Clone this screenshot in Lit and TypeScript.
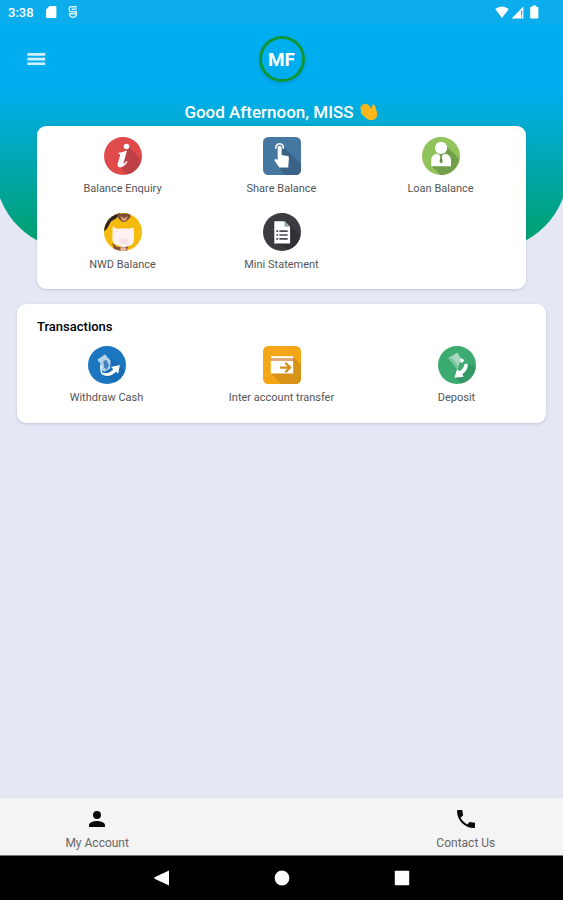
import { LitElement, html, css, TemplateResult } from "lit";
import { customElement } from "lit/decorators.js";

interface Action {
  label: string;
  icon: TemplateResult;
}

const infoIcon = html`<svg class="icon" viewBox="0 0 37 37" aria-hidden="true">
  <circle cx="18.5" cy="18.5" r="18.5" fill="#e14a4a" />
  <path d="M24 9 L36.2 22.5 A18.5 18.5 0 0 1 22 36.6 L15 28 Z" fill="#be4145" />
  <circle cx="21.9" cy="9.3" r="2.7" fill="#fff" />
  <path d="M14.2 15.4 C17 15 19.6 14.4 22.4 13.2 L19 25.2 C18.8 26.6 20.2 25.8 22 23.4 L23 24.2 C20.6 28.2 18 29.6 15.6 29.6 C13.4 29.6 12.8 28 13.4 25.6 L15.6 18.2 C16 17 15.2 16.6 13.9 16.6 Z" fill="#fff" />
</svg>`;

const touchIcon = html`<svg class="icon" viewBox="0 0 37 37" aria-hidden="true">
  <rect width="37" height="37" rx="5" fill="#4677a0" />
  <path d="M20 10 L37 26 V32 a5 5 0 0 1 -5 5 H22 L14 28 Z" fill="#3b6387" />
  <path d="M12.8 11.4 a3.6 3.6 0 1 1 6.8 0" fill="none" stroke="#fff" stroke-width="1.6" />
  <path d="M14.3 10.4 a1.9 1.9 0 0 1 3.8 0 V17.5 L24 18.6 C25 18.9 25.3 19.6 25.2 20.6 L24.6 29.6 H15.8 L11.2 23 C10.8 21.9 12 20.9 13 21.6 L14.3 22.6 Z" fill="#fff" />
</svg>`;

const personIcon = html`<svg class="icon" viewBox="0 0 37 37" aria-hidden="true">
  <circle cx="18.5" cy="18.5" r="18.5" fill="#91c35b" />
  <path d="M23 8 L36.4 21.5 A18.5 18.5 0 0 1 20 37 H18 L9.5 28.5 Z" fill="#739f4a" />
  <circle cx="18.5" cy="10.6" r="6" fill="#fff" />
  <path d="M9 28.4 V23 C9 19 11.4 17 14.6 16.4 L18.5 18.6 L22.4 16.4 C25.8 17 28.2 19 28.2 23 V28.4 Z" fill="#fff" />
  <path d="M17.3 18 h2.6 l-0.6 2 l0.9 4.2 l-1.6 1.7 l-1.6 -1.7 l0.9 -4.2 Z" fill="#6c9344" />
</svg>`;

const piggyIcon = html`<svg class="icon" viewBox="0 0 37 37" aria-hidden="true">
  <defs><clipPath id="round"><circle cx="18.5" cy="18.5" r="18.5" /></clipPath></defs>
  <g clip-path="url(#round)">
    <rect width="37" height="37" fill="#f4bb0c" />
    <path d="M0 18 V0 H16 L12 5 L7 8 L3 15 Z" fill="#2c2324" />
    <path d="M12 1 L25 0 L26 4 L22 8 L18 9 L14 5 Z" fill="#7a4a33" />
    <path d="M16 3 L20 5 L23 3 L22 7 L18 8 Z" fill="#d8a078" />
    <path d="M8 29 L13 33 H20 L24 32 L22 37 H10 Z" fill="#8a4c3c" />
    <path d="M16 33 L22 34 L21 37 H16 Z" fill="#e8b79c" />
    <path d="M8.4 13 L12 15.2 H25 L28.8 14 L29.4 20 L29 28 Q28.6 30.4 26 31.4 L20 33.6 L13 31.4 Q8.4 30 8.2 26 Z" fill="#fcf0f0" />
    <ellipse cx="19" cy="27.4" rx="4.4" ry="2.8" fill="#f6e2e2" />
  </g>
</svg>`;

const statementIcon = html`<svg class="icon" viewBox="0 0 37 37" aria-hidden="true">
  <circle cx="18.5" cy="18.5" r="18.5" fill="#3b3b41" />
  <path d="M26 12 L36.4 22 A18.5 18.5 0 0 1 25 35.6 L12 29 Z" fill="#303035" />
  <path d="M11 8 H21 L26.4 13.4 V29.8 H11 Z" fill="#fff" />
  <path d="M21 8 L26.4 13.4 H21 Z" fill="#8faaa8" />
  <path d="M13 17.6 h1.8 M13 21.4 h1.8 M13 25.2 h1.8 M16 17.6 h8 M16 21.4 h8 M16 25.2 h8" stroke="#4a4a50" stroke-width="1.6" />
</svg>`;

const withdrawIcon = html`<svg class="icon" viewBox="0 0 37 37" aria-hidden="true">
  <circle cx="18.5" cy="18.5" r="18.5" fill="#1c76c0" />
  <path d="M22 12 L31 18.5 L36 24 A18.5 18.5 0 0 1 26 35.4 L15 28 Z" fill="#186cb3" />
  <path d="M9 13.4 L16.6 8 L19 11 L22 14 L21.6 22 L16 25 Q12 24 12.8 18 Z" fill="#b4d1ea" />
  <path d="M15 14.6 L18 13.6 L20.6 19 L18 23 L15.6 21 Z" fill="#3f82bd" />
  <path d="M12.6 18 Q12 26 15 28" fill="none" stroke="#fff" stroke-width="1.4" />
  <path d="M14.4 26 Q20 27.6 24.6 22.6 L22.4 20.4 L31 18.4 L29.4 27 L27.4 25 Q21.6 30.6 15.4 28.6 Z" fill="#fff" />
</svg>`;

const transferIcon = html`<svg class="icon" viewBox="0 0 37 37" aria-hidden="true">
  <rect width="37" height="37" rx="5" fill="#f3a716" />
  <path d="M29 10 L37 18 V32 a5 5 0 0 1 -5 5 H18 L8 27 Z" fill="#d69318" />
  <path d="M7.6 10 H29.4 V12 H7.6 Z M7.6 14.4 H29.4 V26.8 H7.6 Z" fill="#fff" />
  <path d="M7.6 12 H29.4 V14.4 H7.6 Z" fill="#dca77c" />
  <path d="M16.6 21 H26 M21.8 16.4 L26.4 21 L21.8 25.6" fill="none" stroke="#d1901b" stroke-width="2.2" />
</svg>`;

const depositIcon = html`<svg class="icon" viewBox="0 0 37 37" aria-hidden="true">
  <circle cx="18.5" cy="18.5" r="18.5" fill="#3bab72" />
  <path d="M28 17 L36.6 21 A18.5 18.5 0 0 1 22 36.6 L17 30 Z" fill="#349767" />
  <path d="M10 11.6 L19 6.4 L21.6 11 L25.4 13.4 L24 16.4 L21 16 L19.4 22 Z" fill="#a6d7bd" />
  <path d="M10 11.6 L14 12 L20 20 L18.6 22.6 Z" fill="#7fc39f" />
  <path d="M21.8 12 L25.4 13.6 L24 16.4 L21.6 15 Z" fill="#fff" />
  <path d="M29 17.6 Q29.4 23.6 23.6 27.6 L25 30 L16 31 L18.6 22.4 L20.8 24.6 Q25.4 22 25.8 17.4 Z" fill="#fff" />
</svg>`;

const balances: Action[] = [
  { label: "Balance Enquiry", icon: infoIcon },
  { label: "Share Balance", icon: touchIcon },
  { label: "Loan Balance", icon: personIcon },
  { label: "NWD Balance", icon: piggyIcon },
  { label: "Mini Statement", icon: statementIcon },
];

const transactions: Action[] = [
  { label: "Withdraw Cash", icon: withdrawIcon },
  { label: "Inter account transfer", icon: transferIcon },
  { label: "Deposit", icon: depositIcon },
];

@customElement("app-root")
export class AppRoot extends LitElement {
  static styles = css`
    :host {
      display: flex;
      flex-direction: column;
      min-height: 100vh;
      background: #e5e8f4;
      font-family: Roboto, "Liberation Sans", sans-serif;
      color: #555;
    }
    * {
      box-sizing: border-box;
    }
    button {
      border: 0;
      padding: 0;
      margin: 0;
      background: none;
      font: inherit;
      color: inherit;
      cursor: pointer;
    }
    svg {
      display: block;
    }
    .hero {
      position: relative;
      isolation: isolate;
      overflow: hidden;
      height: 250px;
      color: #fff;
    }
    /* The backdrop runs past both edges so its corners meet the sides at an angle. */
    .hero::before {
      content: "";
      position: absolute;
      z-index: -1;
      inset: 0 -5px;
      border-radius: 0 0 80px 80px;
      background: linear-gradient(#0cadec 0, #0cadec 22px, #00aeef 26px, #00aeef 90px, #009f66 250px);
    }
    .status {
      display: flex;
      align-items: center;
      justify-content: space-between;
      height: 24px;
      padding: 0 21px 0 8px;
      font-size: 13px;
      font-weight: 500;
    }
    .status-group {
      display: flex;
      align-items: center;
      gap: 10px;
    }
    .signals {
      gap: 2px;
    }
    .toolbar {
      display: grid;
      grid-template-columns: 1fr auto 1fr;
      align-items: center;
      height: 70px;
      padding: 0 24px;
    }
    .menu {
      width: 24px;
      height: 24px;
    }
    .avatar {
      display: flex;
      align-items: center;
      justify-content: center;
      width: 46px;
      height: 46px;
      border: 3px solid #0c9636;
      border-radius: 50%;
      font-size: 19px;
      font-weight: 700;
      box-shadow: 0 2px 4px rgb(0 60 120 / 20%);
    }
    .greeting {
      display: flex;
      align-items: center;
      justify-content: center;
      gap: 5px;
      height: 36px;
      margin: 0;
      font-size: 17px;
      font-weight: 500;
    }
    main {
      position: relative;
      flex: 1;
      margin-top: -124px;
    }
    .card {
      border-radius: 9px;
      background: #fff;
      box-shadow: 0 1px 3px rgb(60 70 110 / 22%);
    }
    .balances {
      margin: 0 37px;
      padding: 11px 6px 12px;
    }
    .transactions {
      margin: 15px 17px 24px;
      padding: 14px 2px 13px;
    }
    .actions {
      display: grid;
      grid-template-columns: repeat(3, 1fr);
      row-gap: 12px;
    }
    .action {
      display: flex;
      flex-direction: column;
      align-items: center;
      gap: 6px;
      height: 64px;
      font-size: 11px;
      line-height: 16px;
    }
    .icon {
      width: 38px;
      height: 38px;
    }
    .title {
      margin: 0 0 10px;
      padding-left: 18px;
      font-size: 13px;
      line-height: 18px;
      font-weight: 500;
      color: #000;
    }
    .tabs {
      display: grid;
      grid-template-columns: repeat(3, 1fr);
      height: 59px;
      padding: 4px 5px 0;
      border-top: 1px solid #e0e0e4;
      border-bottom: 1px solid #777;
      background: #f4f4f4;
    }
    .tab {
      display: flex;
      flex-direction: column;
      align-items: center;
      justify-content: center;
      gap: 4px;
      font-size: 12px;
      line-height: 16px;
      color: #666;
    }
    .contact {
      grid-column: 3;
    }
    .system {
      display: flex;
      align-items: center;
      justify-content: center;
      gap: 96px;
      height: 44px;
      background: #000;
    }
  `;

  private renderAction(action: Action) {
    return html`<button class="action" type="button">${action.icon}<span>${action.label}</span></button>`;
  }

  private renderStatus() {
    return html`<div class="status">
      <div class="status-group">
        <span>3:38</span>
        <svg width="14" height="14" viewBox="0 0 14 14" aria-hidden="true">
          <path d="M5.6 1 H11.4 a1 1 0 0 1 1 1 V12 a1 1 0 0 1 -1 1 H3 a1 1 0 0 1 -1 -1 V4.6 Z" fill="#fff" />
        </svg>
        <svg width="10" height="14" viewBox="0 0 10 14" aria-hidden="true" fill="none" stroke="#d4f1ff" stroke-width="1.4">
          <path d="M9 1.7 H3 Q1.3 1.7 1.3 3.5 V5 Q1.3 6.8 3 6.8 H8.4 V9.6 Q8 11.8 5 12.4 Q2 11.8 1.5 9.6 V8.8 H8.4 M3.6 4.2 H8.7" />
        </svg>
      </div>
      <div class="status-group signals">
        <svg width="14" height="12" viewBox="0 0 14 12" aria-hidden="true">
          <path d="M0.2 3 Q7 -2 13.8 3 L7 12 Z" fill="#fff" />
        </svg>
        <svg width="13" height="13" viewBox="0 0 13 13" aria-hidden="true">
          <path d="M12.4 0.6 V12.4 H0.6 Z" fill="#fff" />
          <path d="M10.6 4.6 V9.6 M10.6 10.6 V11.6" stroke="#0cadec" stroke-width="1.2" />
        </svg>
        <svg width="16" height="14" viewBox="0 0 16 14" aria-hidden="true">
          <path d="M6.6 0.6 h3.4 v1.2 h1.4 a1 1 0 0 1 1 1 V12.4 a1 1 0 0 1 -1 1 H5.2 a1 1 0 0 1 -1 -1 V2.8 a1 1 0 0 1 1 -1 h1.4 Z" fill="#fff" />
        </svg>
      </div>
    </div>`;
  }

  render() {
    return html`
      <header class="hero">
        ${this.renderStatus()}
        <div class="toolbar">
          <button class="menu" type="button" aria-label="Menu">
            <svg width="24" height="24" viewBox="0 0 24 24" aria-hidden="true">
              <path d="M3.4 7.4 H21.2 M3.4 12.1 H21.2 M3.4 16.8 H21.2" stroke="#d2f0fd" stroke-width="2.6" />
            </svg>
          </button>
          <div class="avatar">MF</div>
        </div>
        <h1 class="greeting">
          <span>Good Afternoon, MISS</span>
          <svg width="20" height="20" viewBox="0 0 20 20" role="img" aria-label="Waving hand">
            <path d="M2 9.6 L1.4 5.2 Q1.6 3.8 3 4 L3.2 2.8 Q4.2 1.6 5.6 2.6 L6.4 2 Q7.6 1.4 8.8 2.6 L13 6.8 L13.2 3.4 Q14.4 1.6 15.8 3.6 L17.8 9.6 Q19.4 14.2 16 17 Q12 19.6 8.2 17 L2.8 12.2 Q1.2 11 2 9.6 Z" fill="#fcb91b" />
            <path d="M3.4 4.6 L9.4 10.6 M2.6 8 L7.6 13 M6 3 L11.4 8.4" stroke="#e9a01c" stroke-width="0.7" fill="none" />
          </svg>
        </h1>
      </header>
      <main>
        <section class="card balances" aria-label="Balances">
          <div class="actions">${balances.map((item) => this.renderAction(item))}</div>
        </section>
        <section class="card transactions">
          <h2 class="title">Transactions</h2>
          <div class="actions">${transactions.map((item) => this.renderAction(item))}</div>
        </section>
      </main>
      <nav class="tabs" aria-label="Main">
        <button class="tab" type="button">
          <svg width="24" height="24" viewBox="0 0 24 24" aria-hidden="true">
            <path d="M12 12 a4 4 0 1 0 0 -8 a4 4 0 0 0 0 8 Z M12 14 c-2.7 0 -8 1.3 -8 4 v2 h16 v-2 c0 -2.7 -5.3 -4 -8 -4 Z" fill="#0a0a0a" />
          </svg>
          <span>My Account</span>
        </button>
        <button class="tab contact" type="button">
          <svg width="24" height="24" viewBox="0 0 24 24" aria-hidden="true">
            <path d="M6.6 10.8 c1.4 2.8 3.8 5.1 6.6 6.6 l2.2 -2.2 c0.3 -0.3 0.7 -0.4 1 -0.2 c1.1 0.4 2.3 0.6 3.6 0.6 c0.6 0 1 0.4 1 1 V20 c0 0.6 -0.4 1 -1 1 C10.6 21 3 13.4 3 4 c0 -0.6 0.4 -1 1 -1 h3.5 c0.6 0 1 0.4 1 1 c0 1.2 0.2 2.4 0.6 3.6 c0.1 0.3 0 0.7 -0.2 1 Z" fill="#0a0a0a" />
          </svg>
          <span>Contact Us</span>
        </button>
      </nav>
      <footer class="system">
        <button type="button" aria-label="Back">
          <svg width="24" height="24" viewBox="0 0 24 24"><path d="M19 4.6 V19.4 L4.6 12.8 Q4 12 4.6 11.2 Z" fill="#fff" /></svg>
        </button>
        <button type="button" aria-label="Home">
          <svg width="24" height="24" viewBox="0 0 24 24"><circle cx="12" cy="12" r="7.4" fill="#fff" /></svg>
        </button>
        <button type="button" aria-label="Recent apps">
          <svg width="24" height="24" viewBox="0 0 24 24"><rect x="4.8" y="4.8" width="14.4" height="14.4" rx="0.8" fill="#fff" /></svg>
        </button>
      </footer>
    `;
  }
}
